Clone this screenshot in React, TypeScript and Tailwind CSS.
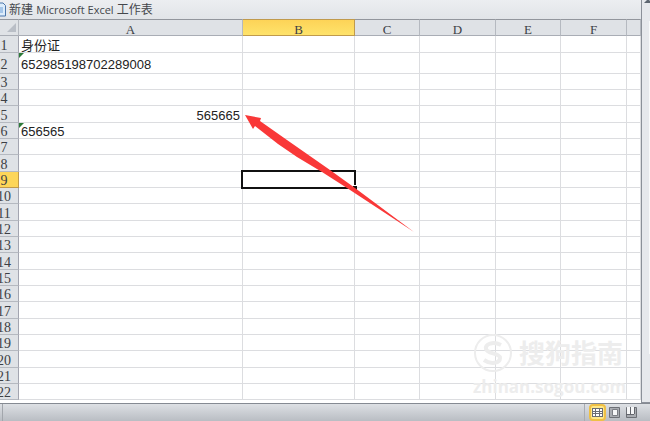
import React from 'react';

const columns = [
  { name: 'A', width: 'w-[224px]' },
  { name: 'B', width: 'w-[112px]' },
  { name: 'C', width: 'w-[65px]' },
  { name: 'D', width: 'w-[76px]' },
  { name: 'E', width: 'w-[65px]' },
  { name: 'F', width: 'w-[66px]' },
  { name: '', width: '' },
];

type Entry = { text: string; right?: boolean; flagged?: boolean };

const entries: Record<number, Entry> = {
  1: { text: '身份证' },
  2: { text: '652985198702289008', flagged: true },
  5: { text: '565665', right: true },
  6: { text: '656565', flagged: true },
};

const rows = Array.from({ length: 22 }, (_, i) => i + 1);

const rowHeight = (row: number) => {
  if (row === 2) return 'h-[21px]';
  // every third row takes the spare pixel
  return row === 1 || row % 3 === 2 ? 'h-[17px]' : 'h-4';
};

const TitleBar = () => (
  <header className="flex h-[19px] items-center bg-gradient-to-b from-[#eceef1] to-[#e1e4e8] text-[#44474c]">
    <svg className="h-[15px] w-[6px] shrink-0" viewBox="0 0 6 15">
      <path d="M-1 1h4l2.500 2.500V14H-1z" fill="#dcecfb" stroke="#4b77ac" />
      <path d="M0 6h3M0 8h3M0 10h3" stroke="#6fa0d8" />
    </svg>
    <h1 className="ml-[3px] text-[12px] leading-4 whitespace-nowrap">
      新建 <span className="text-[11px]">Microsoft Excel</span> 工作表
    </h1>
  </header>
);

const Cell = ({ entry }: { entry?: Entry }) => (
  <td className="relative border-r border-b border-[#dcdde0] p-0">
    {entry?.flagged && (
      <span className="absolute top-0 left-0 border-t-[5px] border-r-[5px] border-t-[#2c7a38] border-r-transparent" />
    )}
    {entry && (
      <div className={`h-[15px] px-0.5 pt-px leading-[15px] whitespace-nowrap ${entry.right ? 'text-right' : 'text-left'}`}>
        {entry.text}
      </div>
    )}
  </td>
);

const Sheet = () => (
  <table className="w-full table-fixed border-separate border-spacing-0 bg-white font-['Liberation_Sans','Noto_Sans_CJK_SC',sans-serif] text-[13px] text-[#222]">
    <colgroup>
      <col className="w-[19px]" />
      {columns.map((col) => (
        <col key={col.name} className={col.width} />
      ))}
    </colgroup>
    <thead className="font-['Liberation_Serif',serif] text-[#3c3f45]">
      <tr className="h-[17px]">
        <td className="border-t border-r border-b border-t-[#92969d] border-r-[#b5b9c0] border-b-[#a9adb5] bg-[#dfe2e6] p-0">
          <svg className="ml-[7px] h-[9px] w-[9px]" viewBox="0 0 9 9">
            <path d="M9 0v9H0z" fill="#b9bec6" />
          </svg>
        </td>
        {columns.map((col) => (
          <th
            key={col.name}
            scope="col"
            className={`border-t border-r border-b p-0 font-normal ${
              col.name === 'B'
                ? 'border-[#c09a4c] bg-gradient-to-b from-[#fdd357] to-[#fee36b]'
                : 'border-t-[#92969d] border-r-[#b5b9c0] border-b-[#a9adb5] bg-[#dfe2e6]'
            }`}
          >
            <div className="h-[15px] pt-0.5 leading-[15px]">{col.name}</div>
          </th>
        ))}
      </tr>
    </thead>
    <tbody>
      {rows.map((row) => (
        <tr key={row} className={rowHeight(row)}>
          <th
            scope="row"
            className={`border-r border-b p-0 font-['Liberation_Serif',serif] text-[14px] font-normal text-[#3c3f45] ${
              row === 9 ? 'border-[#c09a4c] bg-[#fdd659]' : 'border-r-[#a3a5b0] border-b-[#b5b9c0] bg-[#dfe2e6]'
            }`}
          >
            <div className="-ml-2.5 h-[15px] w-7 pt-px text-center leading-[15px]">{row}</div>
          </th>
          {columns.map((col) =>
            row === 9 && col.name === 'B' ? (
              <td key={col.name} className="relative z-10 border-r border-b border-[#dcdde0] p-0">
                <span className="absolute -inset-0.5 border-2 border-[#111]" />
                <span className="absolute -right-[3px] -bottom-[3px] h-[5px] w-[5px] border-t border-l border-white bg-[#111]" />
              </td>
            ) : (
              <Cell key={col.name} entry={col.name === 'A' ? entries[row] : undefined} />
            ),
          )}
        </tr>
      ))}
    </tbody>
  </table>
);

const Arrow = () => (
  <svg className="pointer-events-none absolute top-[115px] left-[245px] z-20 h-[118px] w-[169px]" viewBox="0 0 169 118">
    <path d="M0 0L16 3L15 6L42 25L85 55L110 73L169 117L102 73L77 57L52 42L33 29L10 11L8 14Z" fill="#f93838" />
  </svg>
);

const Watermark = () => (
  <div className="pointer-events-none absolute right-[15px] bottom-[6px] flex w-[153px] flex-col text-[#ededed]">
    <div className="flex items-center gap-1.5">
      <svg className="h-10 w-10 shrink-0" viewBox="0 0 40 40" fill="none" stroke="currentColor">
        <circle cx="20" cy="20" r="18" strokeWidth="2" />
        <path d="M28 12C20 8 12 11 13 16s14 4 14 9-9 7-16 2" strokeWidth="4" />
      </svg>
      <span className="text-[26px] leading-8 font-bold whitespace-nowrap">搜狗指南</span>
    </div>
    <span className="mt-1 text-[17px] leading-5 font-bold">zhinan.sogou.com</span>
  </div>
);

const NormalIcon = () => (
  <svg className="h-[13px] w-[13px] shrink-0" viewBox="0 0 13 13">
    <path d="M1 2h11v9H1z" fill="#6a6d72" />
    <path d="M2 3h2v2H2zM5 3h3v2H5zM9 3h2v2H9zM2 6h2v1H2zM5 6h3v1H5zM9 6h2v1H9zM2 8h2v2H2zM5 8h3v2H5zM9 8h2v2H9z" fill="#fff" />
  </svg>
);

const PageLayoutIcon = () => (
  <svg className="h-[13px] w-[13px] shrink-0" viewBox="0 0 13 13">
    <path d="M1.500 1.500h10v10h-10z" fill="#a9acb1" stroke="#6d7076" />
    <path d="M4.500 3.500h5v6h-5z" fill="#f6f7f8" stroke="#7c7f85" />
  </svg>
);

const PageBreakIcon = () => (
  <svg className="h-[13px] w-[13px] shrink-0" viewBox="0 0 13 13">
    <path d="M1.500 1.500h10v10h-10z" fill="#a9acb1" stroke="#6d7076" />
    <path d="M2 1h3v7H2zM6 1h3v7H6z" fill="#f6f7f8" />
    <path d="M5.500 1v7M9.500 1v7M1 8.500h8" stroke="#63666c" />
  </svg>
);

const views = [
  { label: 'Normal', icon: <NormalIcon /> },
  { label: 'Page Layout', icon: <PageLayoutIcon /> },
  { label: 'Page Break Preview', icon: <PageBreakIcon /> },
];

const StatusBar = () => (
  <footer className="flex h-[18px] items-stretch justify-between border-t border-[#858a92] bg-gradient-to-b from-[#dde0e4] to-[#b9bdc3] pr-2.5 pl-0.5">
    <span className="w-px bg-[#a2a6ac]" />
    <div className="flex border-l border-[#a8acb2] pl-1">
      {views.map((view, i) => (
        <button
          key={view.label}
          aria-label={view.label}
          className={`flex h-[17px] w-[17px] items-center justify-center ${
            i === 0 ? 'rounded-sm border-2 border-[#efc044] bg-[#fee88a]' : ''
          }`}
        >
          {view.icon}
        </button>
      ))}
    </div>
  </footer>
);

const ScrollBar = () => (
  <aside className="flex w-[9px] flex-col items-end border-b border-l border-[#8b9099] bg-[#e6e8ec]">
    <svg className="h-[5px] w-[6px]" viewBox="0 0 6 5">
      <path d="M0 3L4-1L6 1V3z" fill="#5d6570" />
    </svg>
    <span className="mt-4 mb-12 w-px flex-1 bg-[#f8f9fa]" />
  </aside>
);

const App = () => (
  <div className="overflow-hidden bg-[#e6e8ec] font-['Open_Sans','Noto_Sans_CJK_SC',sans-serif]">
    <div className="flex">
      <main className="relative min-w-0 flex-1 bg-white pb-[3px]">
        <TitleBar />
        <Sheet />
        <Watermark />
        <Arrow />
      </main>
      <ScrollBar />
    </div>
    <StatusBar />
  </div>
);

export default App;
